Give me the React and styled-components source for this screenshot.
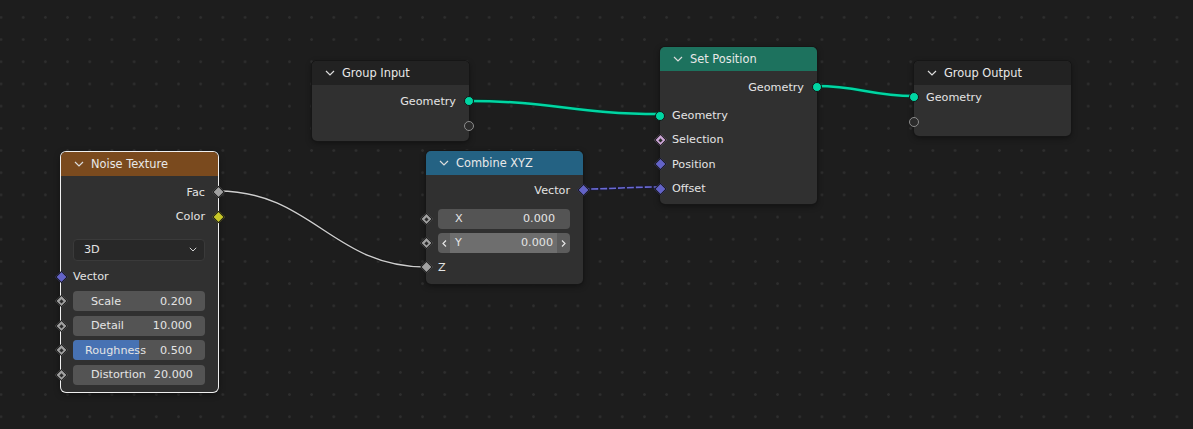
import React from 'react';
import styled, { createGlobalStyle, css } from 'styled-components';

const GlobalStyle = createGlobalStyle`
  html, body {
    margin: 0;
    padding: 0;
    background: #1d1d1d;
  }
  * {
    box-sizing: border-box;
  }
`;

const Canvas = styled.div`
  position: relative;
  width: 1193px;
  height: 429px;
  overflow: hidden;
  background-color: #1d1d1d;
  background-image: radial-gradient(circle, #2e2e2e 1.1px, transparent 1.6px);
  background-size: 22.2px 22.2px;
  background-position: -10.1px 6.3px;
  font-family: 'DejaVu Sans', 'Liberation Sans', sans-serif;
  font-size: 11.2px;
  color: #e4e4e4;
`;

const Links = styled.svg`
  position: absolute;
  inset: 0;
  pointer-events: none;
`;

const Node = styled.div`
  position: absolute;
  left: ${(p) => p.$x}px;
  top: ${(p) => p.$y}px;
  width: 157px;
  background: #303030;
  border-radius: 5px;
  padding-bottom: ${(p) => p.$pb || 4}px;
  box-shadow: ${(p) =>
    p.$selected
      ? '0 0 0 1px #f0f0f0, 0 2px 6px rgba(0,0,0,0.5)'
      : '0 0 0 1px #161616, 0 2px 6px rgba(0,0,0,0.45)'};
`;

const Header = styled.div`
  height: 24px;
  display: flex;
  align-items: center;
  gap: 7px;
  padding-left: 13px;
  background: ${(p) => p.$color};
  border-radius: 5px 5px 0 0;
  color: #e8e8e8;
  font-size: 11.4px;
`;

const Section = styled.div`
  display: flex;
  flex-direction: column;
  padding-top: ${(p) => p.$pt || 0}px;
`;

const Row = styled.div`
  position: relative;
  height: 24.4px;
  display: flex;
  align-items: center;
  justify-content: ${(p) => (p.$out ? 'flex-end' : 'flex-start')};
  padding: 0 13px 0 12px;
`;

const socketColors = {
  geometry: '#00d6a3',
  float: '#a1a1a1',
  color: '#c7c729',
  vector: '#6363c7',
  bool: '#cca6d6',
};

const Socket = styled.span`
  position: absolute;
  top: 50%;
  ${(p) => (p.$side === 'right' ? 'right: -5px;' : 'left: -5px;')}
  width: 10px;
  height: 10px;
  transform: translateY(-50%);
  ${(p) =>
    p.$shape === 'circle' &&
    css`
      border-radius: 50%;
      background: ${socketColors[p.$kind]};
      border: 1px solid #141414;
    `}
  ${(p) =>
    p.$shape === 'empty' &&
    css`
      border-radius: 50%;
      background: #2b2b2b;
      border: 1.5px solid #8c8c8c;
    `}
  ${(p) =>
    p.$shape === 'diamond' &&
    css`
      width: 9px;
      height: 9px;
      ${p.$side === 'right' ? 'right: -4.5px;' : 'left: -4.5px;'}
      background: ${socketColors[p.$kind]};
      border: 0.8px solid #161616;
      transform: translateY(-50%) rotate(45deg);
      &::after {
        content: '';
        display: ${p.$dot ? 'block' : 'none'};
        position: absolute;
        left: 50%;
        top: 50%;
        width: 3.4px;
        height: 3.4px;
        transform: translate(-50%, -50%);
        background: #2a2a2a;
      }
    `}
`;

const Field = styled.div`
  position: relative;
  flex: 1;
  height: 20px;
  border-radius: 4px;
  overflow: hidden;
  background: ${(p) => (p.$hover ? '#5c5c5c' : '#545454')};
  display: flex;
  align-items: center;
  justify-content: space-between;
  padding: 0 ${(p) => p.$pr || 13}px 0 ${(p) => p.$pl || 18}px;
`;

const Fill = styled.div`
  position: absolute;
  left: 0;
  top: 0;
  bottom: 0;
  background: #4772b3;
`;

const HoverBand = styled.div`
  position: absolute;
  left: 12px;
  right: 13px;
  top: 0;
  bottom: 0;
  background: #6e6e6e;
`;

const FieldText = styled.span`
  position: relative;
  z-index: 1;
`;

const Arrow = styled.svg`
  position: absolute;
  top: 7px;
  ${(p) => (p.$side === 'right' ? 'right: 4px;' : 'left: 4px;')}
  z-index: 1;
`;

const Dropdown = styled.div`
  margin: 10px 13px 0 12px;
  height: 22px;
  border-radius: 4px;
  background: #282828;
  border: 1px solid #3a3a3a;
  display: flex;
  align-items: center;
  justify-content: space-between;
  padding: 0 7px 0 10px;
`;

const Spacer = styled.div`
  height: ${(p) => p.$h}px;
`;

const Chevron = ({ w = 10, color = '#dcdcdc' }) => (
  <svg width={w} height={w * 0.6} viewBox="0 0 10 6">
    <polyline points="1,1 5,5 9,1" fill="none" stroke={color} strokeWidth="1.2" />
  </svg>
);

const NodeHeader = ({ title, color }) => (
  <Header $color={color}>
    <Chevron />
    {title}
  </Header>
);

const Output = ({ label, kind, shape = 'circle', dot }) => (
  <Row $out>
    {label}
    <Socket $side="right" $kind={kind} $shape={shape} $dot={dot} />
  </Row>
);

const Input = ({ label, kind, shape = 'circle', dot }) => (
  <Row>
    {label}
    <Socket $side="left" $kind={kind} $shape={shape} $dot={dot} />
  </Row>
);

const ValueInput = ({ label, value, fill, hover, pl, pr }) => (
  <Row>
    <Socket $side="left" $kind="float" $shape="diamond" $dot />
    <Field $hover={hover} $pl={pl} $pr={pr}>
      {fill && <Fill style={{ width: `${fill * 100}%` }} />}
      {hover && (
        <>
          <HoverBand />
          <Arrow $side="left" width="5" height="7" viewBox="0 0 5 7">
            <polyline points="4,0.5 1,3.5 4,6.5" fill="none" stroke="#e6e6e6" strokeWidth="1.2" />
          </Arrow>
          <Arrow $side="right" width="5" height="7" viewBox="0 0 5 7">
            <polyline points="1,0.5 4,3.5 1,6.5" fill="none" stroke="#e6e6e6" strokeWidth="1.2" />
          </Arrow>
        </>
      )}
      <FieldText>{label}</FieldText>
      <FieldText>{value}</FieldText>
    </Field>
  </Row>
);

const link = (x1, y1, x2, y2) => {
  const d = (x2 - x1) * 0.45;
  return `M${x1},${y1} C${x1 + d},${y1} ${x2 - d},${y2} ${x2},${y2}`;
};

const App = () => {
  return (
    <Canvas>
      <GlobalStyle />

      <Links width="1193" height="429">
        <path d={link(468, 101, 660, 114)} stroke="#0b2a22" strokeWidth="4.5" fill="none" />
        <path d={link(468, 101, 660, 114)} stroke="#00d6a3" strokeWidth="2.4" fill="none" />
        <path d={link(816, 86, 914, 96)} stroke="#0b2a22" strokeWidth="4.5" fill="none" />
        <path d={link(816, 86, 914, 96)} stroke="#00d6a3" strokeWidth="2.4" fill="none" />
        <path d={link(218, 191, 426, 267)} stroke="#1a1a1a" strokeWidth="3.5" fill="none" />
        <path d={link(218, 191, 426, 267)} stroke="#cfcfcf" strokeWidth="1.4" fill="none" />
        <path d={link(582, 189, 660, 187)} stroke="#1a1a2e" strokeWidth="3.5" fill="none" />
        <path
          d={link(582, 189, 660, 187)}
          stroke="#6a6ad6"
          strokeWidth="1.6"
          strokeDasharray="7 2"
          fill="none"
        />
      </Links>

      <Node $x={61} $y={152} $pb={5} $selected>
        <NodeHeader title="Noise Texture" color="#7a4a1e" />
        <Section $pt={4}>
          <Output label="Fac" kind="float" shape="diamond" />
          <Output label="Color" kind="color" shape="diamond" />
        </Section>
        <Dropdown>
          3D
          <Chevron w={8} />
        </Dropdown>
        <Spacer $h={4} />
        <Section>
          <Input label="Vector" kind="vector" shape="diamond" />
          <ValueInput label="Scale" value="0.200" />
          <ValueInput label="Detail" value="10.000" />
          <ValueInput label="Roughness" value="0.500" fill={0.5} pl={12} />
          <ValueInput label="Distortion" value="20.000" pr={12} />
        </Section>
      </Node>

      <Node $x={312} $y={61} $pb={3}>
        <NodeHeader title="Group Input" color="#222222" />
        <Section $pt={4}>
          <Output label="Geometry" kind="geometry" />
          <Output label="" shape="empty" />
        </Section>
      </Node>

      <Node $x={426} $y={151} $pb={4}>
        <NodeHeader title="Combine XYZ" color="#246283" />
        <Section $pt={3}>
          <Output label="Vector" kind="vector" shape="diamond" />
        </Section>
        <Section $pt={4}>
          <ValueInput label="X" value="0.000" pl={17} pr={15} />
          <ValueInput label="Y" value="0.000" pl={17} pr={17} hover />
          <Input label="Z" kind="float" shape="diamond" />
        </Section>
      </Node>

      <Node $x={660} $y={47} $pb={3}>
        <NodeHeader title="Set Position" color="#1d725e" />
        <Section $pt={4}>
          <Output label="Geometry" kind="geometry" />
        </Section>
        <Section $pt={4}>
          <Input label="Geometry" kind="geometry" />
          <Input label="Selection" kind="bool" shape="diamond" dot />
          <Input label="Position" kind="vector" shape="diamond" />
          <Input label="Offset" kind="vector" shape="diamond" />
        </Section>
      </Node>

      <Node $x={914} $y={61} $pb={2}>
        <NodeHeader title="Group Output" color="#222222" />
        <Section>
          <Input label="Geometry" kind="geometry" />
          <Input label="" shape="empty" />
        </Section>
      </Node>
    </Canvas>
  );
};

export default App;
